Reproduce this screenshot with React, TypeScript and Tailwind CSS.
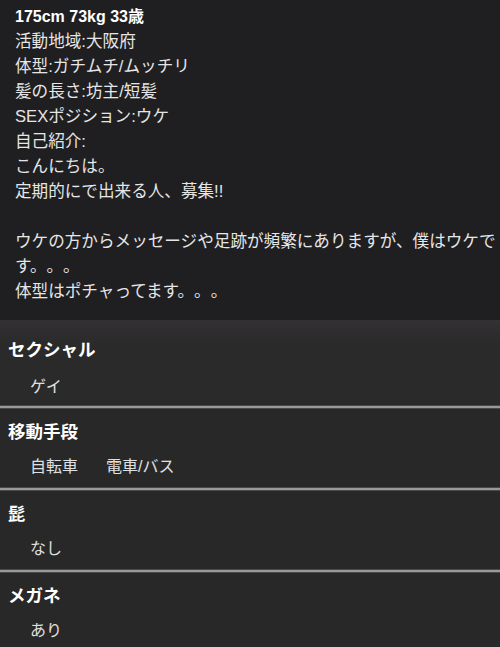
const font = { fontFamily: '"Liberation Sans", "Noto Sans CJK JP", sans-serif' };

const intro = [
  '活動地域:大阪府',
  '体型:ガチムチ/ムッチリ',
  '髪の長さ:坊主/短髪',
  'SEXポジション:ウケ',
  '自己紹介:',
  'こんにちは。',
  '定期的にで出来る人、募集!!',
  '',
  'ウケの方からメッセージや足跡が頻繁にありますが、僕はウケで',
  'す。。。',
  '体型はポチャってます。。。',
];

const sections: { title: string; values: string[] }[] = [
  { title: 'セクシャル', values: ['ゲイ'] },
  { title: '移動手段', values: ['自転車', '電車/バス'] },
  { title: '髭', values: ['なし'] },
  { title: 'メガネ', values: ['あり'] },
];

function Divider() {
  return (
    <div className="flex flex-col">
      <div className="h-px bg-[#4a4a4a]" />
      <div className="h-[2px] bg-[#9a9a9a]" />
      <div className="h-px bg-[#4a4a4a]" />
    </div>
  );
}

export default function App() {
  return (
    <div className="w-[500px] h-[647px] overflow-hidden bg-[#262626] text-[#e6e6e6] [text-spacing-trim:space-all]" style={font}>
      <div className="h-[320px] bg-[#1f1e20] pl-[15px] pt-[4px]">
        <div className="text-[16px] leading-[25px] font-bold text-white">175cm 73kg 33歳</div>
        {intro.map((line, i) => (
          <div key={i} className="h-[25px] text-[16.6px] leading-[25px] whitespace-nowrap">
            {line}
          </div>
        ))}
      </div>
      {sections.map((s, i) => (
        <div key={s.title}>
          <div
            className={
              i === 0
                ? 'h-[85px] bg-gradient-to-b from-[#333133] to-[#2a2a2a] to-30% pl-[8px] pt-[17px]'
                : 'h-[78px] bg-[#282828] pl-[8px] pt-[10px]'
            }
          >
            <div className="text-[17.5px] leading-[26px] font-bold text-white">{s.title}</div>
            <div
              className={
                i === 0
                  ? 'flex gap-[28px] pl-[22px] mt-[12px] text-[16px] leading-[24px] text-[#e0e0e0]'
                  : 'flex gap-[28px] pl-[22px] mt-[10px] text-[16px] leading-[24px] text-[#e0e0e0]'
              }
            >
              {s.values.map((v) => (
                <span key={v}>{v}</span>
              ))}
            </div>
          </div>
          {i < sections.length - 1 && <Divider />}
        </div>
      ))}
    </div>
  );
}
